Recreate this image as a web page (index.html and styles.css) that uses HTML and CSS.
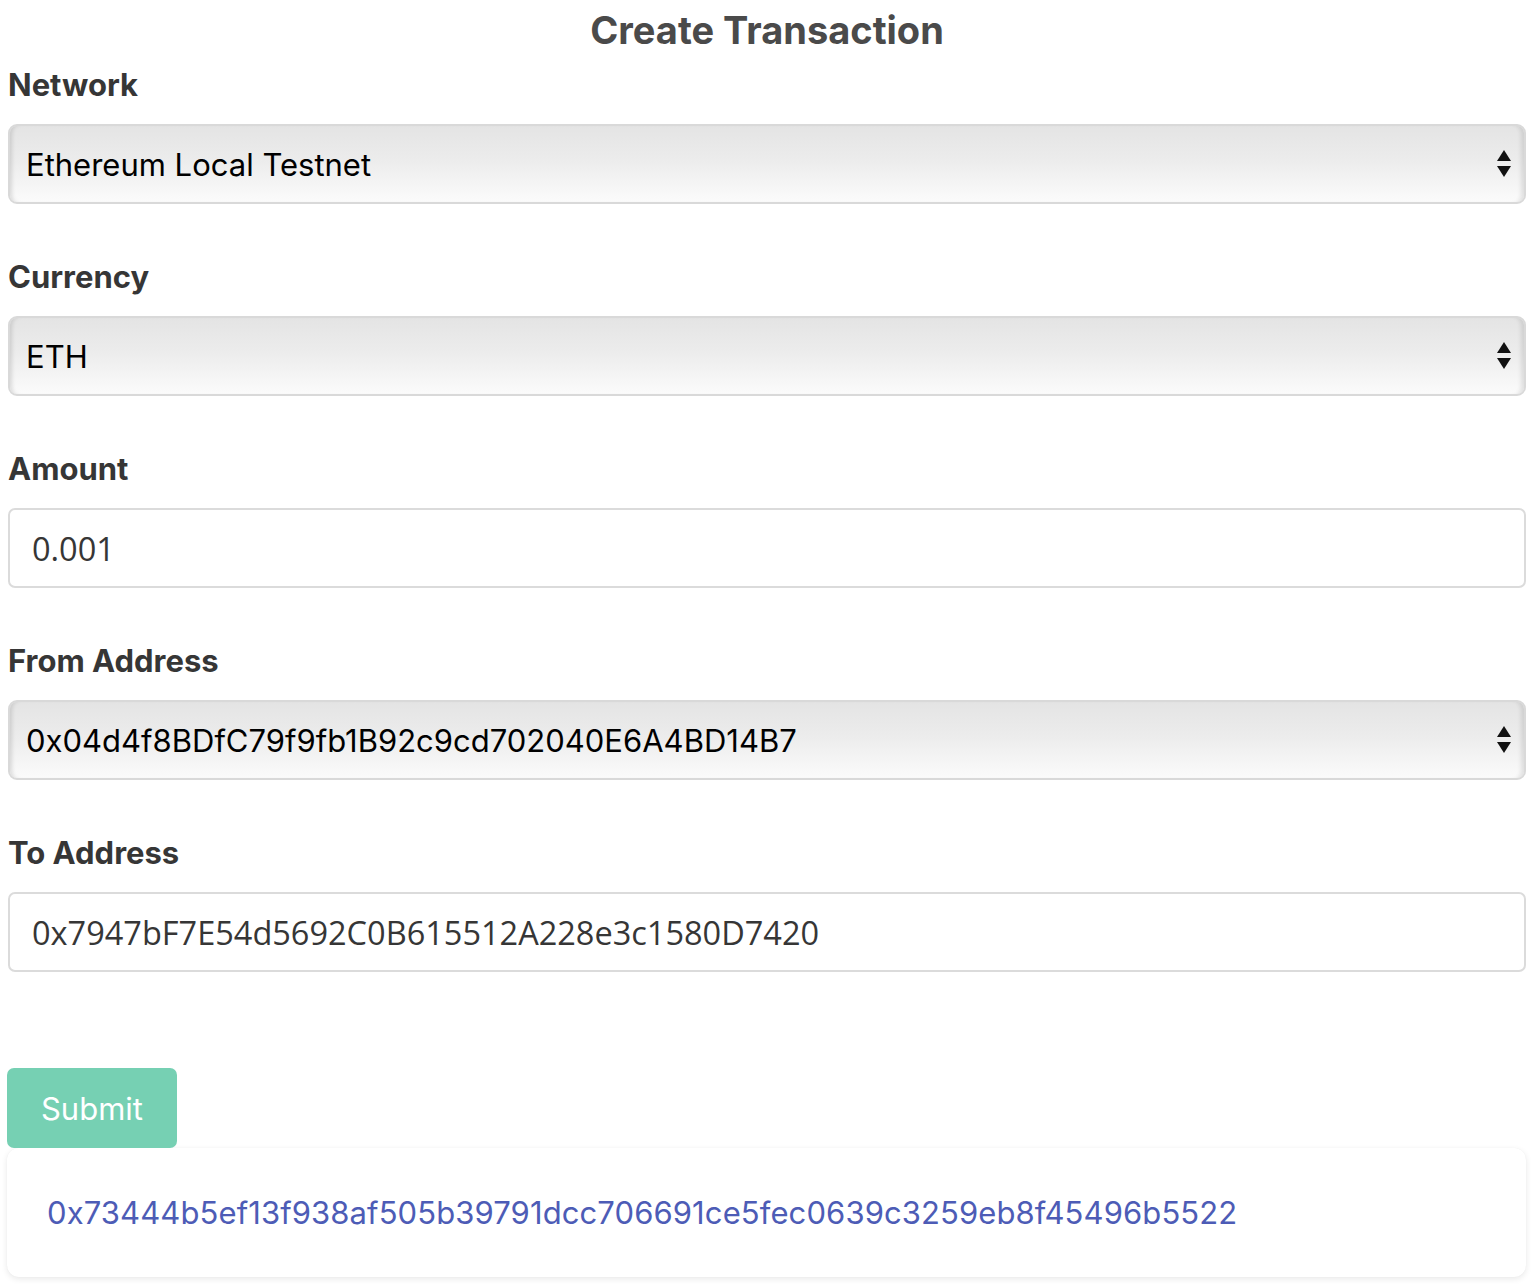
FILE: index.html
```html
<!DOCTYPE html>
<html>
<head>
<meta charset="utf-8">
<link rel="stylesheet" href="styles.css">
</head>
<body>
<div class="page">
  <h2 class="title">Create Transaction</h2>
  <form class="form">
    <div class="field">
      <label class="label">Network</label>
      <div class="select-wrap">
        <select class="select"><option>Ethereum Local Testnet</option></select>
        <svg class="arrows" width="16" height="30" viewBox="0 0 16 30"><path d="M8 1 L15 12 L1 12 Z" fill="#111"/><path d="M1 17 L15 17 L8 28 Z" fill="#111"/></svg>
      </div>
    </div>
    <div class="field">
      <label class="label">Currency</label>
      <div class="select-wrap">
        <select class="select"><option>ETH</option></select>
        <svg class="arrows" width="16" height="30" viewBox="0 0 16 30"><path d="M8 1 L15 12 L1 12 Z" fill="#111"/><path d="M1 17 L15 17 L8 28 Z" fill="#111"/></svg>
      </div>
    </div>
    <div class="field">
      <label class="label">Amount</label>
      <input class="input" type="text" value="0.001">
    </div>
    <div class="field">
      <label class="label">From Address</label>
      <div class="select-wrap">
        <select class="select"><option>0x04d4f8BDfC79f9fb1B92c9cd702040E6A4BD14B7</option></select>
        <svg class="arrows" width="16" height="30" viewBox="0 0 16 30"><path d="M8 1 L15 12 L1 12 Z" fill="#111"/><path d="M1 17 L15 17 L8 28 Z" fill="#111"/></svg>
      </div>
    </div>
    <div class="field">
      <label class="label">To Address</label>
      <input class="input" type="text" value="0x7947bF7E54d5692C0B615512A228e3c1580D7420">
    </div>
    <button class="submit" type="button">Submit</button>
  </form>
  <div class="result">
    <a class="hash" href="#">0x73444b5ef13f938af505b39791dcc706691ce5fec0639c3259eb8f45496b5522</a>
  </div>
</div>
</body>
</html>
```

FILE: styles.css
```css
html, body {
  margin: 0;
  padding: 0;
  background: #fff;
}
.page {
  padding: 0 8px 0 8px;
  font-family: Inter, "Liberation Sans", sans-serif;
}
.title {
  margin: 0;
  height: 65px;
  line-height: 60px;
  text-align: center;
  font-size: 38px;
  font-weight: 700;
  color: #4a4a4a;
}
.form {
  display: flex;
  flex-direction: column;
}
.field {
  display: flex;
  flex-direction: column;
  gap: 21px;
  margin: 0 0 53px 0;
}
.label {
  display: block;
  padding-top: 2px;
  font-size: 31px;
  line-height: 36px;
  font-weight: 700;
  color: #363636;
}
.select-wrap {
  position: relative;
  height: 80px;
}
.select {
  -webkit-appearance: none;
  appearance: none;
  width: 100%;
  height: 80px;
  box-sizing: border-box;
  margin: 0;
  padding: 0 60px 0 16px;
  border: 2px solid #d9d9d9;
  border-radius: 9px;
  background: linear-gradient(to bottom, #e4e4e4 0%, #ececec 45%, #fbfbfb 100%);
  box-shadow: inset 5px 0 4px -3px rgba(0,0,0,0.12), inset -6px 0 4px -3px rgba(0,0,0,0.10);
  font-family: Inter, "Liberation Sans", sans-serif;
  font-size: 31px;
  color: #000;
  outline: none;
}
.arrows {
  position: absolute;
  right: 14px;
  top: 25px;
  pointer-events: none;
}
.input {
  width: 100%;
  height: 80px;
  box-sizing: border-box;
  margin: 0;
  padding: 0 22px;
  border: 2px solid #dbdbdb;
  border-radius: 7px;
  background: #fff;
  font-family: "Open Sans", sans-serif;
  font-size: 32.5px;
  color: #363636;
  outline: none;
}
.submit {
  align-self: flex-start;
  margin: 43px 0 0 -1px;
  width: 170px;
  height: 80px;
  border: none;
  border-radius: 7px;
  background: #76d0b3;
  color: #fff;
  font-family: Inter, "Liberation Sans", sans-serif;
  font-size: 31px;
  cursor: pointer;
}
.result {
  margin: 0 0 7px -1px;
  height: 129px;
  box-sizing: border-box;
  padding: 0 40px;
  display: flex;
  align-items: center;
  background: #fff;
  border-radius: 12px;
  box-shadow: 0 2px 6px rgba(0,0,0,0.09), 0 0 1px rgba(0,0,0,0.05);
}
.hash {
  font-family: Inter, "Liberation Sans", sans-serif;
  font-size: 31px;
  letter-spacing: 0.1px;
  color: #4d5cb6;
  text-decoration: none;
}
```
